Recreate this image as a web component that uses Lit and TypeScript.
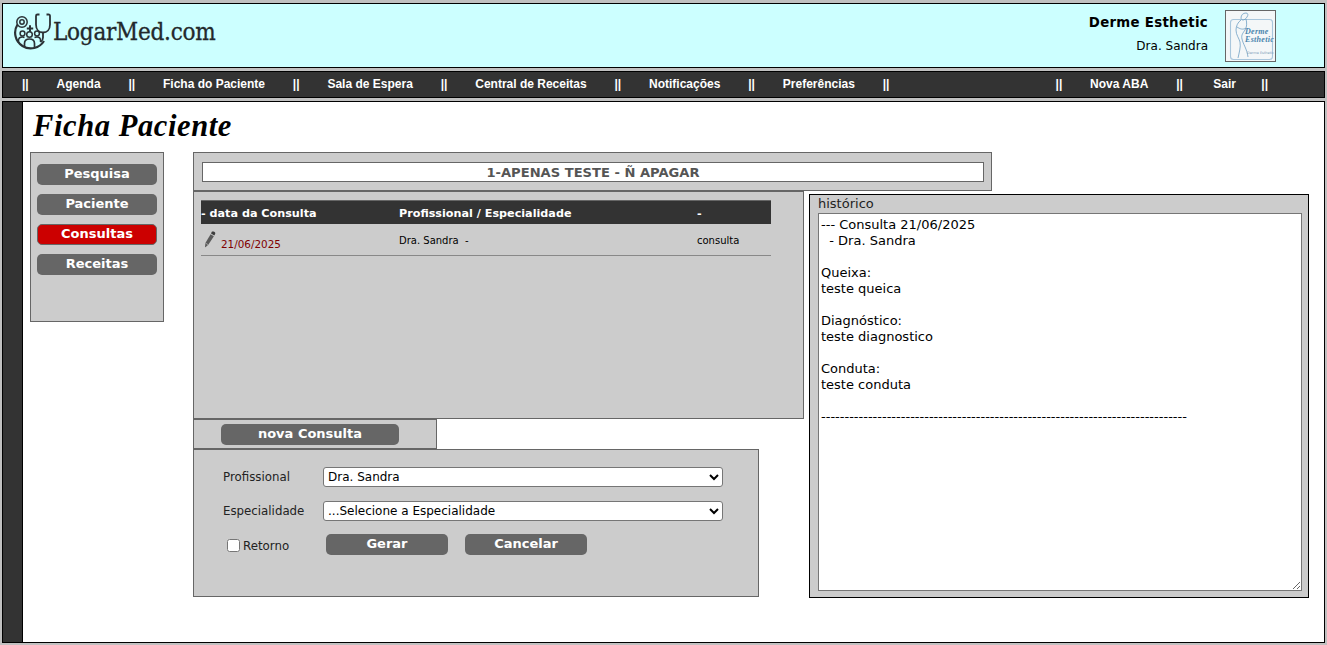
import { LitElement, html, css, svg } from 'lit';
import { customElement } from 'lit/decorators.js';

const HISTORICO = `--- Consulta 21/06/2025
  - Dra. Sandra

Queixa:
teste queica

Diagnóstico:
teste diagnostico

Conduta:
teste conduta

${'-'.repeat(78)}`;

const logoIcon = svg`
  <svg class="logo-icon" viewBox="0 0 40 38" fill="none" stroke="#2b3236" stroke-width="1.5">
    <path d="M4.500 12.500A15.500 15.500 0 1 0 31 29" stroke-width="2.200" />
    <circle cx="9" cy="10" r="5.200" />
    <circle cx="9" cy="10" r="2.200" />
    <path d="M26.500 2.500h-2c-1 0-1.500 .7-1.500 1.500v8.500c0 5 3 8 7 8s7-3 7-8V4c0-.8-.5-1.500-1.500-1.500h-2" stroke-width="1.800" />
    <path d="M30 20.500v5c0 2-1 3.500-2.500 4.500" stroke-width="1.800" />
    <path d="M13.800 16.500h6.400M17 13.300v6.400" stroke-width="2" />
    <circle cx="16.500" cy="22.500" r="2.800" />
    <circle cx="9.500" cy="21.500" r="2.400" />
    <circle cx="24" cy="21.500" r="2.400" />
    <path d="M5.500 31v-2.500c0-2.300 1.800-3.500 4-3.500 .8 0 1.500 .2 2 .5M21.500 25.500c.7-.3 1.500-.5 2.500-.5 2 0 3.500 1.200 3.500 3.500V30" />
    <path d="M11.500 35v-3.500c0-3 2-4.500 5-4.500s5 1.500 5 4.500V35" stroke-width="1.700" />
  </svg>
`;

const clinicLogo = svg`
  <svg class="clinic-figure" viewBox="0 0 49 50" fill="none" stroke="#6f9fc4" stroke-width=".8">
    <rect x="4.500" y="8.500" rx="3" width="42" height="40" stroke="#a8c6dc" stroke-width="1.100" />
    <path d="M15 7c0-3 2-5 5-5 2 0 2.500 2 1 4-1 2-3 3-4 3-1 0-2-1-2-2z" />
    <path d="M15 9c-3 2-5 6-5 10 0 5 3 8 4 12 1 5-1 11-2 16M20 8c1 4 1 8-1 11-2 3-4 5-3 9 1 5 5 10 6 18M11 16c3 2 6 3 9 1" />
  </svg>
`;

const pencil = svg`
  <svg class="pencil" viewBox="0 0 12 17">
    <path d="M7.800 .8c.8-.6 3-.1 3.400 1 .2 .6 .1 1-.2 1.500L10.300 4.500 7 2.500z" fill="#3d3d3d" />
    <path d="M6.600 3.200 9.900 5.200 4.300 13.800 1.500 16.300 1 16 1.400 12z" fill="#5a5a5a" />
    <path d="M1.400 12 4.300 13.800" stroke="#bbb" stroke-width=".7" fill="none" />
  </svg>
`;

@customElement('app-root')
export class AppRoot extends LitElement {
  static styles = css`
    :host {
      display: block;
      height: 645px;
      box-sizing: border-box;
      padding: 3px 2px 2px 2px;
      background: #c0c0c0;
      font-family: "DejaVu Sans", Verdana, sans-serif;
      overflow: hidden;
    }

    .topo {
      display: flex;
      align-items: center;
      height: 65px;
      box-sizing: border-box;
      border: 1px solid #000;
      background: #ccffff;
      padding: 0 48px 0 10px;
    }

    .logo-icon {
      width: 40px;
      height: 38px;
      flex: none;
      align-self: flex-start;
      margin-top: 8px;
    }

    .logo-text {
      font-family: "DejaVu Serif Condensed", "DejaVu Serif", Georgia, serif;
      font-size: 24px;
      letter-spacing: -0.25px;
      color: #23292c;
      margin-top: -7px;
      -webkit-text-stroke: 0.3px #23292c;
    }

    .clinica {
      margin-left: auto;
      text-align: right;
      margin-right: 17px;
      margin-top: -3px;
    }

    .clinica b {
      display: block;
      font-size: 13.330px;
      letter-spacing: 0.3px;
      line-height: 16px;
      color: #000;
    }

    .clinica span {
      display: block;
      margin-top: 8px;
      font-size: 12px;
      line-height: 14px;
      color: #000;
    }

    .clinica-logo {
      position: relative;
      width: 51px;
      height: 52px;
      box-sizing: border-box;
      border: 1px solid #666;
      background: #f4f7f8;
      margin-top: 1px;
    }

    .clinic-figure {
      display: block;
      width: 49px;
      height: 50px;
    }

    .clinica-logo i {
      position: absolute;
      left: 19px;
      top: 17px;
      font-family: "Liberation Serif", serif;
      font-weight: 700;
      font-size: 8px;
      letter-spacing: 0.3px;
      line-height: 8px;
      color: #4a85ad;
    }

    .clinica-logo small {
      position: absolute;
      left: 21px;
      top: 40px;
      font-size: 3.500px;
      line-height: 4px;
      white-space: nowrap;
      color: #7c9db8;
    }

    .menu {
      display: flex;
      align-items: center;
      gap: 27.850px;
      height: 27px;
      box-sizing: border-box;
      margin-top: 3px;
      padding: 0 56px 2px 19px;
      border: 1px solid #000;
      background: #333;
      color: #fff;
      font-family: "Liberation Sans", Arial, sans-serif;
      font-size: 12px;
      font-weight: 700;
    }

    .menu .direita {
      margin-left: auto;
    }

    .menu .sair {
      margin: 0 -2.500px 0 2.500px;
    }

    .corpo {
      display: flex;
      height: 542px;
      box-sizing: border-box;
      margin-top: 3px;
      border: 1px solid #000;
      background: #fff;
    }

    .faixa {
      width: 19px;
      flex: none;
      background: #333;
      border-right: 1px solid #000;
    }

    .conteudo {
      flex: 1;
      min-width: 0;
      padding: 0 0 0 7px;
    }

    h1 {
      margin: 0;
      height: 50px;
      padding-left: 3px;
      font-family: "Liberation Serif", serif;
      font-style: italic;
      font-weight: 700;
      font-size: 30.500px;
      line-height: 48px;
      letter-spacing: 0.6px;
      color: #000;
    }

    .colunas {
      display: flex;
    }

    .lateral {
      width: 134px;
      height: 170px;
      flex: none;
      box-sizing: border-box;
      border: 1px solid #666;
      background: #ccc;
      padding: 11px 6px;
      display: flex;
      flex-direction: column;
      gap: 9px;
    }

    .btn {
      display: block;
      height: 21px;
      box-sizing: border-box;
      border: 0;
      border-radius: 5px;
      background: #666;
      color: #fff;
      font-family: "DejaVu Sans", Verdana, sans-serif;
      font-size: 13px;
      font-weight: 700;
      line-height: 20px;
      text-align: center;
      padding: 0 0 1px;
    }

    .btn.ativo {
      background: #c00;
      border: 1px solid #666;
      line-height: 18px;
    }

    .ficha {
      width: 616px;
      flex: none;
      margin-left: 29px;
    }

    .paciente {
      width: 799px;
      height: 39px;
      box-sizing: border-box;
      border: 1px solid #666;
      background: #ccc;
      padding: 9px 8px;
    }

    .paciente div {
      height: 20px;
      box-sizing: border-box;
      border: 1px solid #666;
      background: #fff;
      color: #555;
      font-size: 13.100px;
      font-weight: 700;
      line-height: 19px;
      text-align: center;
      width: 782px;
    }

    .consultas {
      width: 611px;
      height: 228px;
      box-sizing: border-box;
      border: 1px solid #666;
      background: #ccc;
      padding: 8px 7px;
    }

    table {
      width: 570px;
      border-collapse: collapse;
      table-layout: fixed;
      font-size: 10px;
    }

    th {
      height: 23px;
      padding: 2px 0 0;
      box-sizing: border-box;
      background: #333;
      color: #fff;
      font-size: 11.200px;
      text-align: left;
      border-top: 1px solid #666;
    }

    td {
      height: 32px;
      padding: 3px 0 0;
      box-sizing: border-box;
      color: #000;
      border-bottom: 1px solid #888;
    }

    .data {
      display: flex;
      align-items: flex-end;
      gap: 5px;
      color: #800000;
      font-size: 10.400px;
    }

    .data span {
      margin-bottom: 1px;
    }

    .pencil {
      width: 12px;
      height: 17px;
      flex: none;
      margin: 0 0 3px 3px;
    }

    .aba {
      width: 244px;
      height: 30px;
      box-sizing: border-box;
      border: 1px solid #666;
      background: #ccc;
      padding: 4px 0 0 27px;
    }

    .aba .btn {
      width: 178px;
    }

    .form {
      width: 566px;
      height: 148px;
      box-sizing: border-box;
      border: 1px solid #666;
      background: #ccc;
      padding: 17px 0 0 29px;
      font-size: 11.800px;
      color: #222;
    }

    .linha {
      display: flex;
      align-items: center;
      height: 20px;
      margin-bottom: 14px;
    }

    .linha label {
      width: 100px;
      flex: none;
    }

    select {
      width: 400px;
      height: 20px;
      box-sizing: border-box;
      font-family: "DejaVu Sans", Verdana, sans-serif;
      font-size: 12px;
      background: #fff;
      color: #000;
      border: 1px solid #767676;
      border-radius: 3px;
    }

    .acoes {
      display: flex;
      align-items: center;
      margin-top: -1px;
    }

    .acoes label {
      display: flex;
      align-items: center;
      width: 103px;
      padding-left: 4px;
      margin-top: 2px;
      box-sizing: border-box;
    }

    .acoes input {
      width: 13px;
      height: 13px;
      margin: 0 3px 0 0;
    }

    .acoes .btn {
      width: 122px;
      margin-right: 17px;
    }

    .historico {
      width: 500px;
      height: 404px;
      flex: none;
      box-sizing: border-box;
      margin-top: 42px;
      border: 1px solid #000;
      background: #ccc;
      padding: 0 5px 6px 8px;
      font-size: 13px;
      color: #222;
      display: flex;
      flex-direction: column;
    }

    .historico span {
      height: 18px;
      line-height: 17px;
    }

    textarea {
      flex: 1;
      width: 484px;
      box-sizing: border-box;
      margin: 0;
      padding: 3px 2px 2px;
      border: 1px solid #767676;
      background: #fff;
      color: #000;
      font-family: "DejaVu Sans", Verdana, sans-serif;
      font-size: 13px;
      line-height: 16px;
      outline: none;
    }
  `;

  render() {
    const menu = ['Agenda', 'Ficha do Paciente', 'Sala de Espera', 'Central de Receitas', 'Notificações', 'Preferências'];
    return html`
      <header class="topo">
        ${logoIcon}
        <span class="logo-text">LogarMed.com</span>
        <div class="clinica">
          <b>Derme Esthetic</b>
          <span>Dra. Sandra</span>
        </div>
        <div class="clinica-logo">
          ${clinicLogo}
          <i>Derme<br />Esthetic</i>
          <small>Derme Esthetic</small>
        </div>
      </header>

      <nav class="menu">
        <span>||</span>
        ${menu.map((m) => html`<span>${m}</span><span>||</span>`)}
        <span class="direita">||</span>
        <span>Nova ABA</span>
        <span>||</span>
        <span class="sair">Sair</span>
        <span>||</span>
      </nav>

      <main class="corpo">
        <div class="faixa"></div>
        <div class="conteudo">
          <h1>Ficha Paciente</h1>
          <div class="colunas">
            <aside class="lateral">
              <div class="btn">Pesquisa</div>
              <div class="btn">Paciente</div>
              <div class="btn ativo">Consultas</div>
              <div class="btn">Receitas</div>
            </aside>

            <section class="ficha">
              <div class="paciente"><div>1-APENAS TESTE - Ñ APAGAR</div></div>
              <div class="consultas">
                <table>
                  <colgroup>
                    <col style="width: 198px" />
                    <col style="width: 298px" />
                    <col />
                  </colgroup>
                  <tr>
                    <th>- data da Consulta</th>
                    <th>Profissional / Especialidade</th>
                    <th>-</th>
                  </tr>
                  <tr>
                    <td><div class="data">${pencil}<span>21/06/2025</span></div></td>
                    <td>Dra. Sandra&nbsp; -</td>
                    <td>consulta</td>
                  </tr>
                </table>
              </div>
              <div class="aba"><div class="btn">nova Consulta</div></div>
              <div class="form">
                <div class="linha">
                  <label>Profissional</label>
                  <select><option>Dra. Sandra</option></select>
                </div>
                <div class="linha">
                  <label>Especialidade</label>
                  <select><option>...Selecione a Especialidade</option></select>
                </div>
                <div class="acoes">
                  <label><input type="checkbox" />Retorno</label>
                  <div class="btn">Gerar</div>
                  <div class="btn">Cancelar</div>
                </div>
              </div>
            </section>

            <section class="historico">
              <span>histórico</span>
              <textarea .value=${HISTORICO}></textarea>
            </section>
          </div>
        </div>
      </main>
    `;
  }
}
